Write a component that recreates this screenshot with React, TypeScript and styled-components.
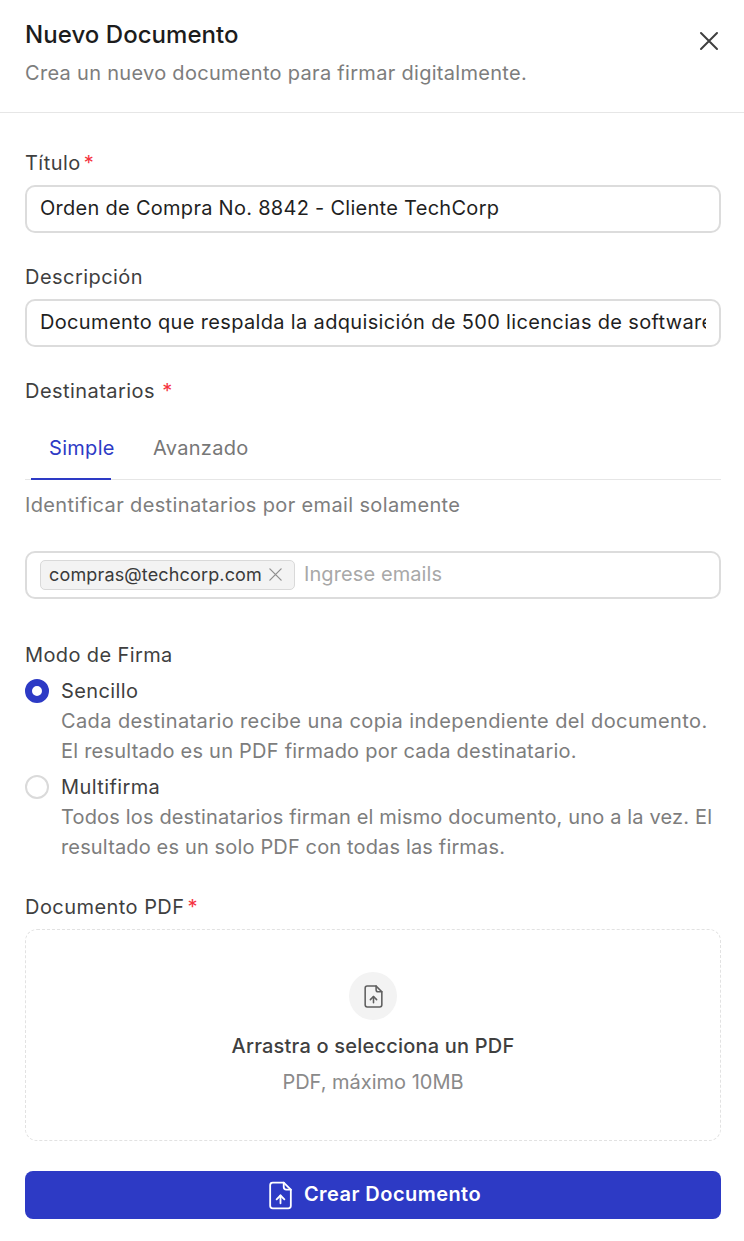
import React from "react";
import styled, { createGlobalStyle } from "styled-components";

const Global = createGlobalStyle`
  html, body { margin: 0; padding: 0; background: #fff; }
  body { font-family: Inter, "Noto Sans", "Liberation Sans", sans-serif; color: #3f3f3f; }
  * { box-sizing: border-box; }
`;

const Page = styled.div`
  width: 744px;
  height: 1241px;
  overflow: hidden;
  display: flex;
  flex-direction: column;
`;

const Header = styled.header`
  height: 113px;
  border-bottom: 1px solid #e6e6e6;
  padding: 20px 22px 0 25px;
  display: flex;
  justify-content: space-between;
  align-items: flex-start;
`;

const Heading = styled.h1`
  margin: 0;
  font-size: 24px;
  line-height: 30px;
  font-weight: 500;
  letter-spacing: 0.05px;
  color: #1c1c1c;
`;

const Subtitle = styled.p`
  margin: 8px 0 0;
  font-size: 20px;
  line-height: 30px;
  letter-spacing: 0.3px;
  color: #7d7d7d;
`;

const CloseButton = styled.button`
  margin-top: 8px;
  width: 26px;
  height: 26px;
  padding: 0;
  border: 0;
  background: none;
  color: #3f3f3f;
  display: flex;
  align-items: center;
  justify-content: center;
`;

const Form = styled.form`
  padding: 35px 23px 0 25px;
  display: flex;
  flex-direction: column;
`;

const Field = styled.div<{ $mb?: number; $mt?: number }>`
  margin-top: ${(p) => p.$mt ?? 0}px;
  margin-bottom: ${(p) => p.$mb ?? 29}px;
`;

const Label = styled.label`
  display: block;
  font-size: 20px;
  line-height: 30px;
  letter-spacing: 0.45px;
  font-weight: 400;
  color: #3f3f3f;
  margin-bottom: 7px;
`;

const Star = styled.span<{ $gap?: number }>`
  color: #f5333f;
  margin-left: ${(p) => p.$gap ?? 3}px;
`;

const TextInput = styled.input<{ $track?: number }>`
  display: block;
  width: 100%;
  height: 48px;
  padding: 0 13px 2px;
  border: 2px solid #dcdcdc;
  border-radius: 10px;
  font: 400 20px Inter, "Noto Sans", sans-serif;
  letter-spacing: ${(p) => p.$track ?? 0.28}px;
  color: #1f1f1f;
  background: #fff;
  outline: none;
`;

const Tabs = styled.div`
  margin-top: -7px;
  height: 74px;
  display: flex;
  border-bottom: 1px solid #e6e6e6;
  padding-left: 6px;
`;

const Tab = styled.div<{ $active?: boolean }>`
  width: ${(p) => (p.$active ? "80px" : "auto")};
  margin-right: ${(p) => (p.$active ? "42px" : "0")};
  height: 74px;
  padding-left: ${(p) => (p.$active ? "18px" : "0")};
  font-size: 20px;
  line-height: 30px;
  letter-spacing: 0.3px;
  padding-top: 27px;
  color: ${(p) => (p.$active ? "#2d3ac5" : "#777")};
  border-bottom: ${(p) => (p.$active ? "2px solid #2d3ac5" : "0")};
`;

const Helper = styled.p`
  margin: 10px 0 31px;
  font-size: 20px;
  line-height: 30px;
  letter-spacing: 0.36px;
  color: #7d7d7d;
`;

const TagInput = styled.div`
  height: 48px;
  border: 2px solid #dcdcdc;
  border-radius: 10px;
  padding: 0 13px;
  display: flex;
  align-items: center;
  gap: 9px;
  margin-bottom: 41px;
`;

const Tag = styled.span`
  height: 30px;
  display: inline-flex;
  align-items: center;
  gap: 6px;
  padding: 0 11px 2px 8px;
  background: #f3f3f3;
  border: 1px solid #d9d9d9;
  border-radius: 5px;
  font-size: 18px;
  letter-spacing: 0.15px;
  color: #3a3a3a;
`;

const Placeholder = styled.span`
  font-size: 20px;
  letter-spacing: 0.1px;
  margin-bottom: 2px;
  color: #a8a8a8;
`;

const ModeLabel = styled.div`
  font-size: 20px;
  line-height: 30px;
  letter-spacing: 0.38px;
  color: #3f3f3f;
  margin-bottom: 6px;
`;

const Option = styled.div`
  display: grid;
  grid-template-columns: 24px 1fr;
  column-gap: 12px;
  margin-bottom: 6px;
`;

const Radio = styled.span<{ $on?: boolean }>`
  width: 24px;
  height: 24px;
  margin-top: 3px;
  border-radius: 50%;
  background: #fff;
  border: ${(p) => (p.$on ? "7.5px solid #2d3ac5" : "2px solid #dadada")};
`;

const OptionTitle = styled.div`
  font-size: 20px;
  line-height: 30px;
  letter-spacing: 0.4px;
  color: #3f3f3f;
`;

const OptionText = styled.div<{ $track: number }>`
  font-size: 20px;
  line-height: 30px;
  letter-spacing: ${(p) => p.$track}px;
  color: #7d7d7d;
  white-space: nowrap;
`;

const Drop = styled.div`
  height: 212px;
  border: 1px dashed #e2e2e2;
  border-radius: 12px;
  display: flex;
  flex-direction: column;
  align-items: center;
  padding-top: 42px;
  margin-bottom: 30px;
`;

const DropIcon = styled.div`
  width: 48px;
  height: 48px;
  border-radius: 50%;
  background: #f3f3f3;
  display: flex;
  align-items: center;
  justify-content: center;
  color: #5f5f5f;
  margin-bottom: 11px;
`;

const DropTitle = styled.div`
  font-size: 20px;
  line-height: 30px;
  letter-spacing: 0.2px;
  font-weight: 500;
  color: #3f3f3f;
  margin-bottom: 6px;
`;

const DropHint = styled.div`
  font-size: 20px;
  line-height: 30px;
  color: #8a8a8a;
`;

const Submit = styled.button`
  height: 48px;
  width: 100%;
  border: 0;
  border-radius: 8px;
  background: #2d3ac5;
  color: #fff;
  font: 600 20px Inter, "Noto Sans", sans-serif;
  letter-spacing: 0.45px;
  display: flex;
  align-items: center;
  justify-content: center;
  gap: 8px;
`;

const SubmitLabel = styled.span`
  margin-bottom: 2px;
`;

const FileUp = ({ size, sw }: { size: number; sw: number }) => (
  <svg width={size} height={size} viewBox="0 0 24 24" fill="none" stroke="currentColor" strokeWidth={sw} strokeLinecap="round" strokeLinejoin="round">
    <path d="M14.5 2H6a2 2 0 0 0-2 2v16a2 2 0 0 0 2 2h12a2 2 0 0 0 2-2V7.5L14.5 2z" />
    <path d="M14.5 2v3.5a2 2 0 0 0 2 2H20" />
    <path d="M12 18v-6" />
    <path d="M9 15l3-3 3 3" />
  </svg>
);

export default function App() {
  return (
    <Page>
      <Global />
      <Header>
        <div>
          <Heading>Nuevo Documento</Heading>
          <Subtitle>Crea un nuevo documento para firmar digitalmente.</Subtitle>
        </div>
        <CloseButton type="button" aria-label="Cerrar">
          <svg width="26" height="26" viewBox="0 0 26 26" fill="none" stroke="currentColor" strokeWidth="2" strokeLinecap="round">
            <path d="M5 5l16 16M21 5L5 21" />
          </svg>
        </CloseButton>
      </Header>
      <Form>
        <Field>
          <Label>Título<Star>*</Star></Label>
          <TextInput readOnly value="Orden de Compra No. 8842 - Cliente TechCorp" />
        </Field>
        <Field>
          <Label>Descripción</Label>
          <TextInput $track={0.34} readOnly value="Documento que respalda la adquisición de 500 licencias de software para el equipo" />
        </Field>
        <Label>Destinatarios <Star $gap={1}>*</Star></Label>
        <Tabs>
          <Tab $active>Simple</Tab>
          <Tab>Avanzado</Tab>
        </Tabs>
        <Helper>Identificar destinatarios por email solamente</Helper>
        <TagInput>
          <Tag>
            compras@techcorp.com
            <svg width="15" height="15" viewBox="0 0 16 16" fill="none" stroke="#8f8f8f" strokeWidth="1.4" strokeLinecap="round">
              <path d="M2 2l12 12M14 2L2 14" />
            </svg>
          </Tag>
          <Placeholder>Ingrese emails</Placeholder>
        </TagInput>
        <ModeLabel>Modo de Firma</ModeLabel>
        <Option>
          <Radio $on />
          <div>
            <OptionTitle>Sencillo</OptionTitle>
            <OptionText $track={0.39}>Cada destinatario recibe una copia independiente del documento.</OptionText>
            <OptionText $track={0.23}>El resultado es un PDF firmado por cada destinatario.</OptionText>
          </div>
        </Option>
        <Option>
          <Radio />
          <div>
            <OptionTitle>Multifirma</OptionTitle>
            <OptionText $track={0.16}>Todos los destinatarios firman el mismo documento, uno a la vez. El</OptionText>
            <OptionText $track={0.15}>resultado es un solo PDF con todas las firmas.</OptionText>
          </div>
        </Option>
        <Field $mb={0} $mt={24}>
          <Label>Documento PDF<Star>*</Star></Label>
          <Drop>
            <DropIcon><FileUp size={25} sw={1.5} /></DropIcon>
            <DropTitle>Arrastra o selecciona un PDF</DropTitle>
            <DropHint>PDF, máximo 10MB</DropHint>
          </Drop>
        </Field>
        <Submit type="button">
          <FileUp size={31} sw={1.4} />
          <SubmitLabel>Crear Documento</SubmitLabel>
        </Submit>
      </Form>
    </Page>
  );
}
